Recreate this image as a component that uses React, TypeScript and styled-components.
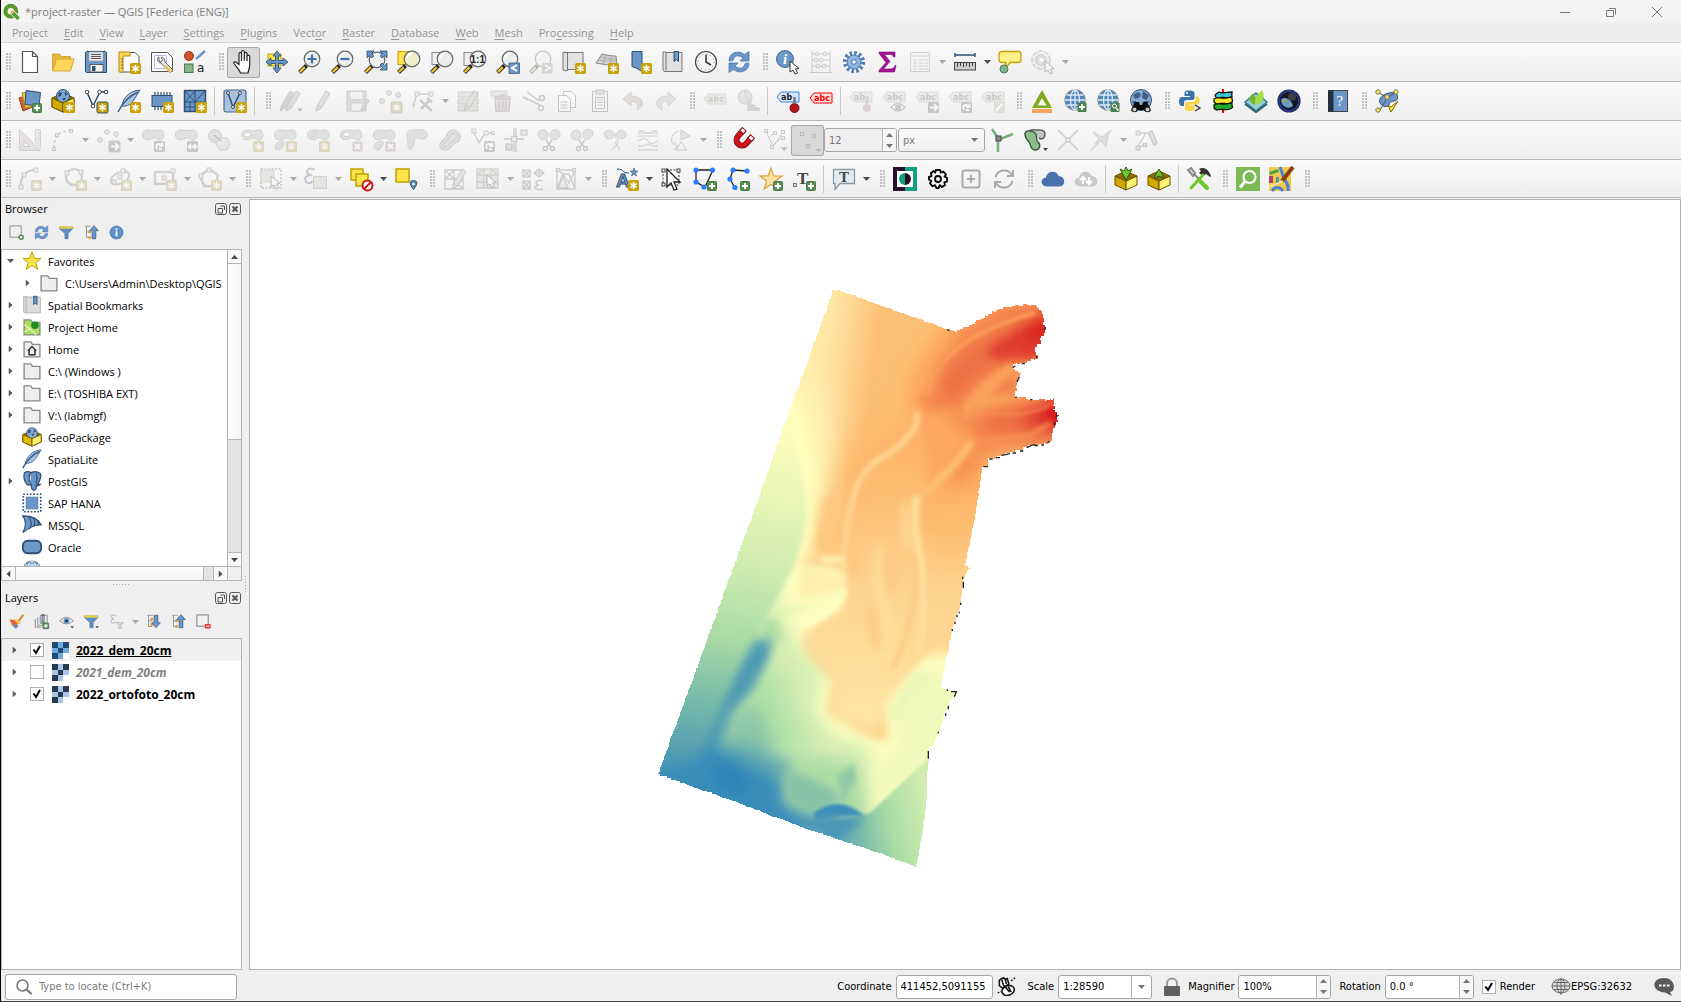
import React from "react";
import styled, { createGlobalStyle, css } from "styled-components";

const ui = `"Open Sans", "Noto Sans", sans-serif`;
const dlg = `"DejaVu Sans Condensed", "DejaVu Sans", sans-serif`;

const Global = createGlobalStyle`
  * { box-sizing: border-box; }
  body { margin: 0; background: #efefef; font-family: ${ui}; font-size: 12px; color: #000; }
  button, input, select { font: inherit; color: inherit; margin: 0; padding: 0; }
  button { border: 0; background: none; }
  svg { display: block; flex: none; }
`;

/* ---------- small icon parts ---------- */

const B = "#6b96c7";
const D = "#2d4f73";

const NewB = () => (
  <g>
    <rect x="13" y="13" width="11" height="11" rx="1.5" fill="#c8a20a" />
    <path d="M18.5 14.8v7.4M15.3 16.6l6.4 3.8M21.7 16.6l-6.4 3.8" stroke="#fff" strokeWidth="1.5" />
  </g>
);
const PlusB = () => (
  <g>
    <rect x="14.5" y="14.5" width="9" height="9" rx="1" fill="#5a8c5a" stroke="#4a7a4a" />
    <path d="M19 16v6M16 19h6" stroke="#fff" strokeWidth="2" />
  </g>
);
const MoveB = ({ d = "M15 18.5h7M19 15l3.500 3.500-3.500 3.500" }: { d?: string }) => (
  <g>
    <rect x="13" y="13" width="11" height="11" rx="1.5" fill="#6f6f6f" />
    <path d={d} stroke="#fff" strokeWidth="1.8" fill="none" />
  </g>
);
const turn = "M16 21c-2-5 1-6 5-4M21.500 14.500v3.500h-3.500M18 21h3";
const flip = "M14.500 18.500h8M17 16l-2.500 2.500 2.500 2.500M20 16l2.500 2.500-2.500 2.500";
const XB = () => (
  <g>
    <rect x="13.500" y="13.500" width="10" height="10" rx="1" fill="#b98a90" />
    <path d="M16 16l5 5M21 16l-5 5" stroke="#fff" strokeWidth="2" />
  </g>
);
const Corner = () => <path d="M18 19.500h6l-3 3.200z" fill="#444" />;
const Blob = ({ hole = false }: { hole?: boolean }) => (
  <g>
    <path
      d="M1.500 7c0-4 3-5.500 7-5S14 3 18 2s5 3 5 6-3 4.500-5 4S14 8.500 11 10.500 1.500 12.500 1.500 7z"
      fill="#aebdb0" stroke="#7d8a80"
    />
    {hole && <ellipse cx="7.500" cy="6.500" rx="3.500" ry="2.300" fill="#fff" stroke="#7d8a80" />}
  </g>
);
const Blob2 = () => <path d="M2 19c0-4 4-6 8-6 3 1 1 3 0 5s-2 4-4 4-4-1-4-3z" fill="#aebdb0" stroke="#7d8a80" />;
const Lens = ({ x = 14, y = 9, fill = "#eceeee" }: { x?: number; y?: number; fill?: string }) => (
  <g>
    <path d="M1.500 22.500l7-7" stroke="#222" strokeWidth="4" />
    <path d="M1.800 22.200l5-5" stroke="#f0c030" strokeWidth="2.400" />
    <circle cx={x} cy={y} r="7.800" fill={fill} stroke="#666" strokeWidth="1.200" />
    <path d={`M${x - 5} ${y - 1}a5.500 5.500 0 0 1 5-4.500`} stroke="#fff" strokeWidth="2" fill="none" />
  </g>
);
const Tag = ({ fill = "#d6d2bc", line = "#a8a48c", ink = "#666", t = "abc" }) => (
  <g>
    <path d="M1 8l4-5h18v10H5z" fill={fill} stroke={line} />
    <text x="5" y="11" fontFamily="DejaVu Sans" fontWeight="700" fontSize="8" fill={ink}>{t}</text>
  </g>
);
const Cursor = ({ x = 0, y = 0 }) => (
  <path transform={`translate(${x} ${y})`} d="M0 0v11l3-2 2 4 2.500-1-2-4 3.500-.500z" fill="#fff" stroke="#333" />
);
const Star = ({ fill = "#fbe54a", line = "#c4a000" }) => (
  <path d="M12 1l2.700 7.800 8.300.2-6.600 4.900 2.400 8.100L12 17.300 5.200 22l2.400-8.100L1 9l8.300-.2z" fill={fill} stroke={line} strokeWidth="1.200" />
);
const Globe = ({ cx = 12, cy = 11, r = 10 }) => (
  <g fill="none" stroke="#dfeaf5" strokeWidth="1.300">
    <circle cx={cx} cy={cy} r={r} fill="#4f86bd" stroke="#7a8894" />
    <ellipse cx={cx} cy={cy} rx={r * 0.45} ry={r} />
    <path d={`M${cx - r} ${cy}h${2 * r}M${cx} ${cy - r}v${2 * r}M${cx - r * 0.85} ${cy - r * 0.5}h${r * 1.7}M${cx - r * 0.85} ${cy + r * 0.5}h${r * 1.7}`} />
  </g>
);
const Box = () => (
  <g stroke="#6a5200" strokeWidth="1">
    <path d="M1 9l11 5v9L1 18z" fill="#d0a800" />
    <path d="M23 9l-11 5v9l11-5z" fill="#fcf070" />
    <path d="M1 9l11-5 11 5-11 5z" fill="#8a6d00" />
  </g>
);
const Scissors = ({ y = 12 }) => (
  <g fill="none" stroke="#7a6a70" strokeWidth="1.400">
    <path d={`M9 ${y}l5 7M15 ${y}l-5 7`} />
    <circle cx="8.500" cy="20.500" r="2" /><circle cx="15.500" cy="20.500" r="2" />
  </g>
);
const Sync = ({ c = B, e = "#4a7ab0" }) => (
  <g fill={c} stroke={e} strokeWidth=".8">
    <path d="M2 11C2 4 8 1 14 2.500l3.500 2L22 1.500V11h-9l3-3c-5-4-9-2-10 2.500z" />
    <path d="M22 13c0 7-6 10-12 8.500l-3.500-2L2 22.500V13h9l-3 3c5 4 9 2 10-2.500z" />
  </g>
);
const Pencil = ({ dx = 0, s = "#c9b9a0" }) => (
  <path transform={`translate(${dx} 0)`} d="M4 22l1.500-6L14 2l4 2.500L9.500 19z M5.500 16l4 3" fill={s} stroke="#777" />
);
const Pt = ({ x, y, c = "#ddd", r = 2 }: { x: number; y: number; c?: string; r?: number }) => (
  <rect x={x - r} y={y - r} width={2 * r} height={2 * r} fill={c} stroke="#777" />
);
const Folder = () => <path d="M2.500 3.500h8l2 3h9v15h-19z" fill="#eee" stroke="#888" strokeWidth="1.600" />;

/* ---------- icon set, 24 x 24 ---------- */

const icons: Record<string, React.ReactNode> = {
  "New Project": <path d="M4.500 1.500h10l5 5v16h-15zM14.500 1.500v5h5" fill="#fff" stroke="#555" strokeWidth="1.200" />,
  "Open Project": (
    <g stroke="#d2aa3a"><path d="M1.500 20V4h7l2 2.500h9V11" fill="#e8b83a" /><path d="M1.500 21l4-12h17.500l-3.500 12z" fill="#fbd65a" /></g>
  ),
  "Save Project": (
    <g><path d="M2.500 1.500h19l1 1v20h-20l-1-1v-19z" fill={B} stroke={D} /><rect x="5" y="2" width="14" height="9" fill="#e9e9e9" stroke="#999" strokeWidth=".6" /><path d="M7 4.500h10M7 6.500h10M7 8.500h10" stroke="#555" /><rect x="6" y="14.500" width="13" height="7.500" fill="#f2f2f2" stroke="#444" strokeWidth=".8" /><rect x="8" y="16" width="3.500" height="5" fill={D} /></g>
  ),
  "New Layout": (
    <g><path d="M3 2.500h15l4 4V22H3z" fill="#fff" stroke="#555" /><path d="M2 2h11v4H6v16H2z" fill="#fbd65a" stroke="#b58a10" /><path d="M4 9h2M4 12h2M4 15h2M4 18h2" stroke="#7a5a00" /><NewB /></g>
  ),
  "Layout Manager": (
    <g><path d="M1.500 2.500h16l5 5v14h-21z" fill="#fff" stroke="#555" /><path d="M4.500 5.500h12v13h-12z" fill="none" stroke="#a9bbe8" /><path d="M9 7c-3 1-2 6 2 6l9 9.500 3-2.500-8-8c0-3-2-5-4-5l1.500 3-1.500 2-2-1z" fill="#e5e5e5" stroke="#666" /><path d="M15 16l6 6" stroke="#e8c65a" strokeWidth="3" /></g>
  ),
  "Style Manager": (
    <g><circle cx="6" cy="6" r="4.500" fill="#d2522a" stroke="#8a3010" /><path d="M13 9l9-8" stroke={B} strokeWidth="2.500" /><rect x="1.500" y="14" width="8.500" height="8.500" fill="#8ab58a" stroke="#4a7a4a" /><text x="14" y="22" fontFamily="DejaVu Sans" fontSize="12" fill="#222">a</text></g>
  ),
  "Pan Map": (
    <path d="M8.500 23c-1-3-4-6-6.500-9.500-.5-2 1.500-2 2.500-1l2.500 2V4c0-2 2.300-2 2.500 0V2c.2-2 2.600-2 2.800 0v1.500c.5-1.500 2.500-1.500 2.700.5v2c.6-1.300 2.700-1.200 2.700.8V15c0 3-1.200 5-1.700 8zM9.500 4v7M12.300 3.500v7M15 5v6" fill="#fff" stroke="#222" strokeWidth="1.200" />
  ),
  "Pan Map to Selection": (
    <g><rect x="3" y="4" width="13" height="12" fill="#fbe54a" stroke="#c4a000" /><path d="M12 1l4 5h-2.500v4.500H18V8l5 4-5 4v-2.500h-4.500V18H16l-4 5-4-5h2.500v-4.500H6V16l-5-4 5-4v2.500h4.500V6H8z" fill={B} stroke={D} strokeWidth=".9" /></g>
  ),
  "Zoom In": <g><Lens /><path d="M14 4.500v9M9.500 9h9" stroke="#3d72b0" strokeWidth="2.200" /></g>,
  "Zoom Out": <g><Lens /><path d="M9.500 9h9" stroke="#3d72b0" strokeWidth="2.200" /></g>,
  "Zoom Full": (
    <g><Lens x={13} y={10} /><g fill={B} stroke={D} strokeWidth=".8"><path d="M3 1h7L7.500 3.500 10 6 8 8 5.500 5.500 3 8z" /><path d="M23 1v7l-2.500-2.500L18 8l-2-2 2.500-2.500L16 1z" /><path d="M23 20h-7l2.500-2.500L16 15l2-2 2.500 2.500L23 13z" /></g></g>
  ),
  "Zoom to Selection": <g><rect x="1" y="1.500" width="13" height="13" fill="#fbe54a" stroke="#c4a000" /><Lens x={15} fill="#efecc8" /></g>,
  "Zoom to Layer": <g><rect x="2" y="2.500" width="12" height="12" fill="#eee" stroke="#888" /><Lens x={15} /></g>,
  "Zoom to Native": (
    <g><rect x="1" y="2.500" width="8" height="13" fill="#eee" stroke="#888" /><Lens x={15} fill="#eee" /><text x="7.500" y="12.500" fontFamily="Liberation Sans" fontWeight="700" fontSize="10" fill="#222">1:1</text></g>
  ),
  "Zoom Last": <g><Lens x={14} /><rect x="13" y="13" width="10.500" height="10.500" fill={B} stroke={D} strokeWidth=".7" /><path d="M21 15l-5 3 5 3" stroke="#fff" strokeWidth="2" fill="none" /></g>,
  "Zoom Next": <g><Lens x={14} /><rect x="13" y="13" width="10.500" height="10.500" fill="#999" /><path d="M16 15l5 3-5 3" stroke="#fff" strokeWidth="2" fill="none" /></g>,
  "New Map View": <g><path d="M4 2.500h17v17H6l-2 1.500-3-1V2z" fill="#e2e2e2" stroke="#777" /><path d="M1.500 2.500h4v18" fill="none" stroke="#777" /><NewB /></g>,
  "New 3D Map View": <g><path d="M7 4c5 1 8 2 14 2l1 9c-7 0-12 0-21-2z" fill="#d0d0d0" stroke="#888" /><path d="M3 10c6 1 12 1 18 1M5 7c5 1 10 2 16 2M11 5L8 14M16 6l-1 9" stroke="#a4a4a4" fill="none" strokeWidth=".8" /><NewB /></g>,
  "New Spatial Bookmark": <g><path d="M4 1.500h10v20l-5-3-5-2z" fill={B} stroke={D} /><NewB /></g>,
  "Show Spatial Bookmarks": <g><path d="M5 2.500h16v19H3l-1-2V2h3zM5 2.500v18" fill="#e2e2e2" stroke="#777" /><path d="M13 1.500h4.500v10l-2.200-2-2.300 2z" fill={B} stroke={D} /></g>,
  "Temporal Controller": <g><circle cx="12" cy="12" r="10.500" fill="#f2f4f6" stroke="#444" strokeWidth="1.200" /><circle cx="12" cy="12" r="8" fill="none" stroke="#889" strokeDasharray="1 3.200" /><path d="M12 4.500V12l5 3" stroke="#333" strokeWidth="1.500" fill="none" /></g>,
  Refresh: <Sync />,
  "Identify Features": <g><circle cx="9" cy="9" r="8.500" fill={B} stroke={D} strokeWidth=".8" /><text x="7" y="14" fontFamily="Liberation Serif" fontStyle="italic" fontWeight="700" fontSize="15" fill="#fff">i</text><Cursor x={14} y={11} /></g>,
  "Field Calculator": <g fill="none" stroke="#777"><path d="M3 1v21M21 1v21M1 22.500h22M3 4h18M3 10h18M3 16h18" /><g fill="#ddd"><circle cx="8" cy="4" r="2" /><circle cx="16" cy="4" r="2" /><circle cx="7" cy="10" r="2" /><circle cx="12" cy="10" r="2" /><circle cx="9" cy="16" r="2" /><circle cx="15" cy="16" r="2" /></g></g>,
  Toolbox: <g><circle cx="12" cy="12" r="8.800" fill="none" stroke="#4a7ab0" strokeWidth="4.600" strokeDasharray="2.400 2.208" /><circle cx="12" cy="12" r="7" fill="#8db4dd" stroke="#4a7ab0" /><circle cx="12" cy="12" r="2.300" fill="#f2f2f2" stroke="#4a7ab0" /></g>,
  "Statistical Summary": <path d="M4 2h16v5h-1.500c-.5-2-1.500-2.500-4-2.500H9.500L15 11.500 8.500 19H15c3 0 4-1 5-3.500h1L19.500 22H4v-1.500l7-8-7-9z" fill="#a8129a" stroke="#780a70" strokeWidth=".6" />,
  "Attribute Table": <g fill="#eef1f3" stroke="#888"><rect x="2.500" y="2.500" width="19" height="19" /><path d="M3 6h18M5 10h4M11 10h4M16 10h4M5 13h4M11 13h4M16 13h4M5 16h4M11 16h4M16 16h4M5 19h4M11 19h4M16 19h4" /></g>,
  "Measure Line": <g><path d="M2 5h20M2 3v4M22 3v4" stroke={D} strokeWidth="1.400" /><rect x="1.500" y="12.500" width="21" height="7.500" fill="#ccc" stroke="#444" /><path d="M4.500 13v4M7.500 13v3M10.500 13v4M13.500 13v3M16.500 13v4M19.500 13v3" stroke="#444" /></g>,
  "Map Tips": <g><path d="M4 1.500h16q3 0 3 3v5q0 3-3 3h-8L7 19l1-6.500H4q-3 0-3-3v-5q0-3 3-3z" fill="#fbf08a" stroke="#c4a000" strokeWidth="1.300" /><circle cx="6" cy="19" r="4" fill="#7db58a" stroke="#4a7a5a" /></g>,
  "Run Feature Action": <g><circle cx="10" cy="10" r="9" fill="#e2e2e2" stroke="#888" strokeWidth="1.500" strokeDasharray="5 1.500" /><circle cx="10" cy="10" r="5.500" fill="#aaa" stroke="#888" /><path d="M8.500 7l5 3-5 3z" fill="#fff" /><Cursor x={14} y={11} /></g>,

  "Data Source Manager": <g><path d="M1 9l10-3 3 12-9 4z" fill="#d2602a" stroke="#9a3a10" /><path d="M4 4l11-2 2 15-10 2z" fill="#f2c94a" stroke="#a88a10" /><path d="M8 1.500l14.500 2L21 17 7 15.500z" fill={B} stroke={D} /><PlusB /></g>,
  "New GeoPackage Layer": <g><Box /><circle cx="12" cy="7" r="6.500" fill="#7ba5d4" stroke={D} /><path d="M8 3l3 1-1 3-3 1zM14 2l3 3-3 2zM11 9l4 0-2 3z" fill={D} /><path d="M1 9l11 5v9L1 18z" fill="#d0a800" stroke="#6a5200" /><path d="M23 9l-11 5v9l11-5z" fill="#fcf070" stroke="#6a5200" /><NewB /></g>,
  "New Shapefile Layer": <g fill="none" stroke={D}><path d="M3 3l6 14L16 3h6" strokeWidth="1.500" /><g fill="#fff" stroke="#444"><circle cx="3" cy="3" r="1.800" /><circle cx="9" cy="17" r="1.800" /><circle cx="15.500" cy="3" r="1.800" /><circle cx="22" cy="3" r="1.800" /></g><NewB /></g>,
  "New SpatiaLite Layer": <g><path d="M23 1C12 2 6 9 5 17c5 1 10-2 13-8z" fill="#a9c4e4" stroke="#3d618a" /><path d="M1 23C5 15 12 7 21 3" fill="none" stroke="#3d618a" strokeWidth="1.500" /><NewB /></g>,
  "New Scratch Layer": <g><path d="M5 3v18M8 3v18M11 3v18M14 3v18M17 3v18M20 3v18" stroke={D} strokeWidth="1.200" /><rect x="2" y="6.500" width="20" height="11" fill={B} stroke={D} /><NewB /></g>,
  "New Mesh Layer": <g><rect x="1.500" y="1.500" width="21" height="21" fill={B} stroke={D} strokeWidth="1.500" /><path d="M1.500 13h21M12 1.500v21M2 2l10 11M12 2L2 13M22 2L12 13M7 13v9M2 18h10" stroke={D} fill="none" /><NewB /></g>,
  "New Virtual Layer": <g><rect x="1" y="1" width="22" height="22" rx="2" fill="#a9c1de" stroke="#4a6a8f" strokeWidth="1.200" /><path d="M5 4l5 14 7-14" stroke={D} strokeWidth="1.500" fill="none" /><g fill="#fff" stroke="#444"><circle cx="5" cy="4" r="1.500" /><circle cx="10" cy="18" r="1.500" /><circle cx="17" cy="4" r="1.500" /></g><NewB /></g>,
  "Current Edits": <g><Pencil dx={-3} s="#9a9a98" /><Pencil dx={3} s="#bdaaa0" /><Corner /></g>,
  "Toggle Editing": <Pencil />,
  "Save Layer Edits": <g><path d="M2 2h19v20H2z" fill="#aaa" stroke="#777" /><path d="M5 2.500h13v8H5zM6 14h12v8H6z" fill="#eee" stroke="#888" /><path d="M16 22l1-4 5-8 2 1.500-5 9z" fill="#b98" stroke="#777" /></g>,
  "Add Feature": <g fill="#bbb" stroke="#777"><circle cx="4" cy="12" r="2.500" /><circle cx="11" cy="4" r="2.500" /><circle cx="20" cy="6" r="2.500" /><NewB /></g>,
  "Vertex Tool": <g fill="none" stroke="#777"><path d="M6 5L2 18M6 5h13" strokeWidth="1.500" /><Pt x={6} y={5} /><Pt x={20} y={5} /><path d="M10 20l9-9M9 11l12 11M16 9l5 4" stroke="#887c6c" strokeWidth="2.500" /></g>,
  "Modify Attributes": <g><path d="M2 3h20v5H2zM2 10h20v5H2zM2 17h20v5H2z" fill="#c8c8a8" stroke="#888" /><Pencil dx={4} /></g>,
  "Delete Selected": <g><path d="M2 2h16v5H2z" fill="#d8c8b0" stroke="#999" /><path d="M6 10h15l-1 12H7zM5 8h17M11 6h5M10 12v8M13.500 12v8M17 12v8" fill="#cdb4b4" stroke="#867070" strokeWidth="1.300" /></g>,
  "Cut Features": <g fill="none" stroke="#777" strokeWidth="1.500"><path d="M1 8l17 8M5 3l12 9" /><circle cx="20" cy="9" r="2.500" /><circle cx="19" cy="19" r="2.500" /></g>,
  "Copy Features": <g fill="#fff" stroke="#666"><path d="M8.500 2.500h8l4 4v12h-12z" /><path d="M3.500 6.500h8l4 4v12h-12zM5.500 13h7M5.500 16h7M5.500 19h7" /></g>,
  "Paste Features": <g fill="#f2f2ee" stroke="#666"><rect x="4.500" y="2.500" width="15" height="20" /><rect x="8" y="1" width="8" height="4" fill="#bbb" /><path d="M7.500 8.500h9v11h-9zM9 11h6M9 13.500h6M9 16h6" fill="#fff" /></g>,
  Undo: <path d="M10 3L2 10l8 7v-4c5-1 8 1 6 8 8-4 8-14-6-14z" fill="#c2a898" stroke="#988" />,
  Redo: <path d="M14 3l8 7-8 7v-4c-5-1-8 1-6 8-8-4-8-14 6-14z" fill="#b2c2b2" stroke="#898" />,
  "Layer Labeling": <g transform="translate(0 2)"><Tag ink="#777" /></g>,
  "Layer Diagrams": <g><circle cx="9" cy="8" r="7" fill="#aebfae" stroke="#7d8a80" /><path d="M9 8V1a7 7 0 0 1 6 10z" fill="#cdb0b0" stroke="#988" /><path d="M12 22V12h3v10M16 22v-6h3v6M20 22v-3h3v3" fill="#aab4b0" stroke="#778" /></g>,
  "Pin Labels Tool": <g><Tag fill="#d5e6fb" line="#3d86e0" ink="#222" t="ab" /><circle cx="18.500" cy="19" r="4.500" fill="#b3161c" stroke="#7a0a10" /><path d="M18.500 15V8" stroke="#777" strokeWidth="2.500" /></g>,
  "Show Unplaced Labels": <g transform="translate(0 1)"><Tag fill="#ffdede" line="#ff0000" ink="#f00000" /></g>,
  "Pin Unpin Labels": <g><Tag t="ab" /><circle cx="18" cy="19" r="4" fill="#b98a8a" /><path d="M18 15V7" stroke="#888" strokeWidth="3" /></g>,
  "Show Hide Labels": <g><Tag /><path d="M9 18.500q7-8 14 0-7 7-14 0z" fill="#fff" stroke="#777" strokeWidth="1.300" /><circle cx="16" cy="18.500" r="3" fill="#777" /></g>,
  "Move Label": <g><Tag /><MoveB /></g>,
  "Rotate Label": <g><Tag /><MoveB d={turn} /></g>,
  "Change Label": <g><Tag /><rect x="13" y="13" width="11" height="11" fill="#bdb69a" /><path d="M15 22l6-7" stroke="#fff" strokeWidth="2.500" /></g>,
  "GRASS Tools": <g><path d="M12 1l10 18H2zM12 9l-4.500 7.500h9z" fill="#7fa81c" fillRule="evenodd" /><path d="M2 21h20M2 23h20" stroke="#f08a28" strokeWidth="1.300" /></g>,
  "Add WMS": <g><Globe /><rect x="14.500" y="13.500" width="9" height="9.500" rx="1" fill="#4a8050" /><path d="M19 15v6M16 18h6" stroke="#fff" strokeWidth="1.800" /></g>,
  "Search WMS": <g><Globe /><rect x="14.500" y="13.500" width="9" height="9.500" rx="1" fill="#4a8050" /><circle cx="18.500" cy="17" r="2" fill="none" stroke="#fff" /><path d="M20 19l2.500 2.500" stroke="#fff" strokeWidth="1.500" /></g>,
  MetaSearch: <g><circle cx="12" cy="11" r="10.500" fill="#88add4" stroke={D} /><path d="M4 6l5-3 3 2-2 4-4 1zM14 2l6 4-2 5-5-2zM3 12l4 0 2 4H5zM14 12l7 0-3 3z" fill="#3d5f88" /><path d="M6 13h4l1 3h2l1-3h4l4 8c-1 3-6 3-7 0h-6c-1 3-6 3-7 0z" fill="#0a0a0a" /><circle cx="5.500" cy="20.500" r="2" fill="#ccc" /><circle cx="18.500" cy="20.500" r="2" fill="#ccc" /></g>,
  "Python Console": <g><path d="M11 1.500c-4 0-4.500 1.500-4.500 3V7H12v1H4C2 8 1 10 1 12.500S2 17 4 17h2v-3c0-2 1-3 3-3h5c2 0 2.500-1 2.500-2.500v-4c0-2-1.500-3-5.500-3z" fill="#3a72a4" /><path d="M12 22c4 0 4.500-1.500 4.500-3v-2.500H11v-1h8c2 0 2.500-2 2.500-4S21 7.500 19 7.500h-1.500v3c0 1.500-1 2.500-3 2.500h-5c-2 0-2.500 1-2.500 2.500v4c0 1.500 1 2.500 5 2.500z" fill="#fcd246" /><circle cx="9" cy="4" r="1" fill="#fff" /><path d="M17 16l5 3-5 3" stroke="#333" strokeWidth="1.300" fill="none" /></g>,
  "Layer Stack": <g stroke="#111" strokeWidth="1.300"><path d="M12 0v24" stroke="#f00" strokeWidth="2" /><path d="M3 16l4-2c5 3 8 0 14 0-1 3 3 4-2 6-5 2-8-1-13 1-4-1-3-4-3-5z" fill="#1fae2c" /><path d="M3 10l4-2c5 3 8 0 14 0-1 3 3 4-2 6-5 2-8-1-13 1-4-1-3-4-3-5z" fill="#f5e626" /><path d="M5 5l3-2c4 2 8 0 13 0-1 3 2 3-2 5-5 2-8-1-12 1-4-1-3-3-2-4z" fill="#3fc6dc" /></g>,
  "Leaf Plugin": <g><path d="M1 13l11-9 11 9-11 9z" fill="#8fd0d8" stroke="#3a7a86" strokeWidth="1.500" /><path d="M1 15l11 8 11-8" fill="none" stroke="#2f6670" strokeWidth="2" /><path d="M11 16C4 13 5 7 8 5c4 2 5 6 3 11z" fill="#6cb82a" /><path d="M11 16c-1-8 4-12 7-15 3 6 3 13-7 15z" fill="#a6dc4a" /></g>,
  "Earth Engine": <g><circle cx="12" cy="12" r="11" fill="#2a3a86" stroke="#1c2a66" strokeWidth="1.200" /><circle cx="12" cy="12" r="9" fill="#15181f" /><circle cx="15" cy="8" r="4" fill="#3a3d44" /><path d="M4 11c2-4 10-2 12 6-4 4-12 1-12-6z" fill="#5f98d4" /><path d="M5 11l4-1 1 3-3 1zM11 14l3 1-1 3z" fill="#b3a840" /></g>,
  "Help Contents": <g><rect x="2.500" y="1.500" width="19" height="21" fill={B} stroke="#444" /><rect x="2" y="1.500" width="5.500" height="21" fill="#23313f" /><text x="10.500" y="17" fontFamily="Liberation Serif" fontSize="15" fill="#fff">?</text></g>,
  "Geometry Checker": <g><path d="M5 10c3-6 10-6 15-7 4 4 3 9-1 9-5 0-4 3-6 5-4 2-10-2-8-7z" fill={B} stroke={D} /><path d="M3 3l9 6 9-6M5 21l7-12" stroke="#555" fill="none" /><g fill="#f7ec3c" stroke="#777"><circle cx="3" cy="3" r="2.200" /><circle cx="21" cy="3" r="2.200" /><circle cx="12" cy="8" r="2.200" /><circle cx="3" cy="21" r="2.200" /></g><path d="M13 16l3 7 7-11-7 6z" fill="#f7ec3c" stroke="#886a00" /></g>,

  "Advanced Digitizing": <g fill="#cdb9a8" stroke="#888"><path d="M1.500 1.500l21 21h-21zM6 13v5.500h5.500z" fillRule="evenodd" /><path d="M17.500 1.500h5v18l-5-5zM20 5h2M20 8h2M20 11h2" fill="#d8d4c0" /></g>,
  "Circular String": <g><path d="M3 20C3 8 8 3 19 3" fill="none" stroke="#777" strokeDasharray="3 2" strokeWidth="1.500" /><Pt x={3} y={21} r={1.500} /><Pt x={6} y={7} r={1.500} /><Pt x={20} y={3} r={1.500} /></g>,
  "Move Feature": <g fill="#bbb" stroke="#777"><circle cx="4" cy="12" r="2.500" /><circle cx="11" cy="4" r="2.500" /><circle cx="20" cy="6" r="2.500" /><MoveB /></g>,
  "Rotate Feature": <g><Blob /><MoveB d={turn} /></g>,
  "Scale Feature": <g><Blob /><MoveB d={flip} /></g>,
  "Simplify Feature": <g fill="#aebdb0" stroke="#7d8a80"><circle cx="8" cy="8" r="6.500" /><path d="M9 16l4-6h7l3.500 6-4 6h-7z" fill="#c8d4ca" /><path d="M7 7l7 6" stroke="#555" strokeWidth="1.500" /></g>,
  "Add Ring": <g><Blob hole /><NewB /></g>,
  "Add Part": <g><Blob /><Blob2 /><NewB /></g>,
  "Fill Ring": <g><Blob hole /><ellipse cx="7.500" cy="6.500" rx="3" ry="2" fill="#9fb0a2" /><NewB /></g>,
  "Delete Ring": <g><Blob hole /><XB /></g>,
  "Delete Part": <g><Blob /><Blob2 /><XB /></g>,
  "Reshape Features": <path d="M2 6c1-5 4-4 7-4s11-2 13 3-3 7-6 6-5-2-6 0 0 6-3 9-4 0-4-3-1-7-1-11z" fill="#aebdb0" stroke="#7d8a80" />,
  "Offset Curve": <path d="M2 18c-1-5 5-6 6-9S11 2 15 2s9 4 7 9-6 3-8 7-11 6-12 0zM5 17c0-3 5-3 6-7s4-5 6-5 4 3 2 5-5 3-7 6-6 4-7 1z" fill="#aebdb0" stroke="#7d8a80" strokeWidth="1.200" />,
  "Reverse Line": <g><path d="M2 3l6 12L14 5l8 0" fill="none" stroke="#777" strokeWidth="1.500" /><Pt x={3} y={3} /><Pt x={15} y={5} /><Pt x={22} y={5} r={1.500} /><MoveB d={turn} /></g>,
  "Trim Extend": <g fill="none" stroke="#777" strokeWidth="1.300"><path d="M10 0v9M10 15v9M0 11h20M12 0v24" /><rect x="7.500" y="8.500" width="5" height="5" fill="#eee" /><rect x="17" y="2" width="6" height="5" fill="#cfc29a" /><rect x="2" y="16" width="6" height="6" fill="#cdb0b0" /></g>,
  "Split Features": <g><path d="M1 6c0-6 10-6 10 1 0 7-10 6-10-1zM23 6c0-6-10-6-10 1 0 7 10 6 10-1z" fill="#aebdb0" stroke="#7d8a80" /><Scissors /></g>,
  "Split Parts": <g><path d="M1 7c0-6 10-7 10 0 0 7-10 6-10 0zM23 5c0-5-10-5-10 1 0 8 10 6 10-1z" fill="#aebdb0" stroke="#7d8a80" /><Scissors /></g>,
  "Merge Features": <g><path d="M1 6c0-5 9-5 10 0h3c0-5 9-5 9 0 0 6-8 6-9 2h-3c-1 4-10 4-10-2z" fill="#aebdb0" stroke="#7d8a80" /><path d="M12 9c5 3 2 10-3 12M12 14l5 8" stroke="#777" fill="none" /></g>,
  "Merge Attributes": <g stroke="#777" fill="none"><path d="M2 3h6q4 5 8 0h6M2 8h20M2 13q8-5 10 0t10 0M2 18h6q4-4 8 0h6M2 22h20M2 5h20" /></g>,
  "Rotate Symbols": <g stroke="#777" fill="none"><path d="M10 3C1 5 0 16 8 19M5 14l4 5-5 3" /><path d="M12 2l9 6-9 4z" fill="#bbb" /><path d="M12 14l6 8H7z" /></g>,
  "Enable Snapping": <g transform="rotate(42 12 12)"><path d="M4 3h5v9a3 3 0 0 0 6 0V3h5v9a8 8 0 0 1-16 0z" fill="#d4141a" stroke="#8a0a10" /><path d="M4 2.500h5v4H4zM15 2.500h5v4h-5z" fill="#fff" stroke="#8a0a10" /></g>,
  "Snap Mode": <g stroke="#777" fill="none"><path d="M3 3l7 16 8-12M6 10l5-5M10 17l10-9" /><Pt x={3} y={3} r={1.500} /><Pt x={12} y={5} r={1.500} /><Pt x={20} y={4} r={1.500} /><Pt x={20} y={10} r={1.500} /><Pt x={9} y={19} r={1.500} /><Corner /></g>,
  "Snap Type": <g><Pt x={6} y={6} r={1.500} /><Pt x={18} y={8} r={1.500} /><Pt x={12} y={18} r={1.500} /><path d="M20 21h5l-2.500 2.800z" fill="#555" /></g>,
  "Topological Editing": <g stroke="#79b07c" strokeWidth="2.500" fill="none"><path d="M2 1l6 9M10 11l13-5M8 13v11" /><rect x="6" y="8" width="5" height="5" fill="#888" stroke="#444" strokeWidth="1" /></g>,
  "Avoid Overlap": <g><path d="M5 4c3-4 7-2 9-2s8-1 8 4-4 6-6 4" fill="#c4c4c4" stroke="#555" strokeWidth="1.300" /><path d="M2 6c0-4 7-4 10-1 3 2 0 6 3 9s2 8-3 8-4-6-6-8S2 9 2 6z" fill="#8dbd8d" stroke="#3d5a40" strokeWidth="1.500" /><path d="M20 20h5l-2.500 3z" fill="#444" /></g>,
  "Snap Intersection": <g stroke="#777" strokeWidth="1.500" fill="none"><path d="M2 2l20 20M22 2L2 22" /><circle cx="12" cy="12" r="2" fill="#eee" /></g>,
  "Tracing": <g stroke="#999" strokeWidth="1.300" fill="none"><path d="M2 22L23 2" /><path d="M4 4l9 5 7-5-3 14-5-5-6 3 4-5z" fill="#b5ad92" /></g>,
  "Self Snapping": <g stroke="#777" strokeWidth="1.300" fill="none"><path d="M3 5l9 0-9 15 7-3" /><path d="M14 5l6 12 3-2-5-12z" fill="#bbb" /><Pt x={4} y={5} r={1.800} /><Pt x={4} y={20} r={1.800} /><Pt x={11} y={17} r={1.500} /></g>,

  "Add Circular String": <g><path d="M3 20C2 10 8 3 17 3" fill="none" stroke="#777" strokeWidth="2" /><Pt x={3} y={20} /><Pt x={6} y={8} /><Pt x={18} y={3} /><NewB /></g>,
  "Add Circle": <g><circle cx="11" cy="10" r="8" fill="none" stroke="#888" strokeWidth="2.500" /><Pt x={4} y={6} /><Pt x={18} y={5} /><NewB /></g>,
  "Add Ellipse": <g><ellipse cx="12" cy="11" rx="10" ry="5.500" transform="rotate(-25 12 11)" fill="none" stroke="#888" strokeWidth="2" /><Pt x={12} y={10} /><Pt x={6} y={15} /><Pt x={15} y={4} /><NewB /></g>,
  "Add Rectangle": <g><rect x="2" y="5" width="18" height="12" fill="none" stroke="#888" strokeWidth="2.500" /><Pt x={11} y={11} /><Pt x={20} y={4} /><NewB /></g>,
  "Add Regular Polygon": <g><path d="M11 2l9 6-3 11H6L2 9z" fill="none" stroke="#888" strokeWidth="2.500" /><Pt x={11} y={3} /><Pt x={3} y={9} /><NewB /></g>,
  "Select Features": <g><rect x="2" y="2" width="20" height="19" fill="none" stroke="#666" strokeDasharray="2 1.500" strokeWidth="1.500" /><rect x="2" y="3" width="13" height="12" fill="#cfc4a8" stroke="#999" /><Cursor x={12} y={9} /></g>,
  "Select by Expression": <g><path d="M11 3C4-1 0 5 6 8c-7 1-6 9 0 8l5-3" fill="none" stroke="#667" strokeWidth="2" /><rect x="9.500" y="9.500" width="13" height="12" fill="#cfc4a8" stroke="#888" /></g>,
  "Deselect Features": <g><rect x="2" y="2" width="12" height="11" fill="#fbe54a" stroke="#c4a000" strokeWidth="1.500" /><rect x="7" y="7" width="12" height="12" fill="#fbe54a" stroke="#c4a000" strokeWidth="1.500" /><circle cx="18.500" cy="18.500" r="5" fill="#fff" stroke="#d4141a" strokeWidth="2" /><path d="M15 22l7-7" stroke="#d4141a" strokeWidth="2" /></g>,
  "Select by Location": <g><rect x="2" y="2" width="13" height="13" fill="#fbe54a" stroke="#c4a000" strokeWidth="1.500" /><path d="M19.500 22.500c-5-6-4-9 0-9s5 3 0 9z" fill="#5a86a8" stroke="#3d5a70" /><circle cx="19.500" cy="17" r="1.300" fill="#fff" /></g>,
  "Edit Mesh": <g stroke="#777" fill="none"><path d="M2 3h18v19H2zM2 12h18M11 3v19M2 3l9 9M11 3l-9 9M11 12l9 10M20 12l-9 10" strokeWidth="1.300" /><Pencil dx={5} /></g>,
  "Select Mesh": <g stroke="#888" fill="#d0cab0"><path d="M1 2h21v19H1zM1 8h21M1 15h21M8 2v19M15 2v19M1 8l7-6M22 8l-7-6" strokeWidth="1.300" /><Cursor x={11} y={8} /></g>,
  "Transform Mesh": <g stroke="#777" fill="none" strokeWidth="1.300"><rect x="2" y="3" width="7" height="7" /><path d="M2 3l7 7M9 3L2 10" /><path d="M13 6l5-4 5 4-5 4zM13 6h10M18 2v8" /><rect x="2" y="14" width="7" height="8" /><path d="M2 14l7 8M9 14l-7 8M22 14c-8-2-9 3-4 4-7 1-5 6 4 4" strokeWidth="1.500" /></g>,
  "Reindex Mesh": <g stroke="#777" fill="none" strokeWidth="1.300"><path d="M3 3h18v19H3zM3 22L9 7l6 0 6 15M9 7l6 9 6-13M3 3l6 4" /><path d="M9 9l5 12H4z" fill="#ddd6b8" /><Pt x={4} y={3} r={1.500} /><Pt x={20} y={3} r={1.500} /></g>,
  "New Annotation Layer": <g><text x="1" y="20" fontFamily="Liberation Sans" fontWeight="700" fontSize="19" fill={B} stroke={D} strokeWidth=".9">A</text><path d="M2 2c8 0 4 4 12 4" fill="none" stroke={D} /><path d="M19 1l1 3h3l-2.500 2 1 3-2.500-2-2.500 2 1-3L15 4h3z" fill={B} stroke={D} strokeWidth=".6" /><NewB /></g>,
  "Select Annotation": <g><path d="M3 3h16v15H3z" fill="none" stroke="#444" strokeDasharray="2 1.500" /><g fill="#fff" stroke="#444"><rect x="2" y="2" width="3" height="3" /><rect x="17" y="2" width="3" height="3" /><rect x="2" y="16" width="3" height="3" /></g><path d="M7 2v18l4-4 3 7 3-1-3-7h6z" fill="#fff" stroke="#222" strokeWidth="1.300" /></g>,
  "Polygon Annotation": <g><path d="M3 3h17l-8 17-9-5z" fill="none" stroke="#222" strokeWidth="1.300" /><g fill="#2a7fff"><circle cx="3" cy="3" r="2.600" /><circle cx="19.500" cy="3" r="2.600" /><circle cx="3" cy="15" r="2.600" /><circle cx="11" cy="20" r="2.600" /></g><PlusB /></g>,
  "Line Annotation": <g><path d="M21 4l-14-1L4 12l5 9" fill="none" stroke="#222" strokeWidth="1.300" /><g fill="#2a7fff"><circle cx="21" cy="4" r="2.600" /><circle cx="7" cy="3" r="2.600" /><circle cx="4" cy="12" r="2.600" /><circle cx="9" cy="20.500" r="2.600" /></g><PlusB /></g>,
  "Marker Annotation": <g><Star fill="#fbe2a0" line="#d9a440" /><PlusB /></g>,
  "Text Annotation": <g><Pt x={3} y={18} r={1.500} /><text x="5" y="17" fontFamily="Liberation Serif" fontWeight="700" fontSize="17" fill="#444">T</text><PlusB /></g>,
  "Text Balloon": <g><path d="M1.500 2.500h21v14H8l-5 6v-6H1.500z" fill="#e4ecf0" stroke="#8a97a0" strokeWidth="1.300" /><text x="7" y="14.500" fontFamily="Liberation Serif" fontWeight="700" fontSize="15" fill="#444">T</text></g>,
  "Contrast": <g><path d="M0 0h12v24H0z" fill="#2a0f2a" /><path d="M12 0h12v24H12z" fill="#0da27c" /><rect x="4" y="4" width="16" height="16" fill="#fff" /><path d="M12 6a6 6 0 0 0 0 12z" fill="#0da27c" /><path d="M12 6a6 6 0 0 1 0 12z" fill="#2a0f2a" /></g>,
  "Plugin Settings": <g fill="none" stroke="#0a0a0a" strokeWidth="1.900"><path d="M10 3h4l.8 2.600 2.600-1 2.500 2.800-1.300 2.300L21 11v3.500l-2.600.8.500 2.700-3 2-2-1.700L12.500 21h-2l-1.500-2.700-2.700.8-2.300-2.700 1.200-2.400L3 12.500V10l2.500-1-.6-2.600L7.500 4l1.700 1.400z" /><circle cx="12" cy="12" r="3" /></g>,
  "Add Item": <g fill="none" stroke="#aaa" strokeWidth="2"><rect x="3.500" y="3.500" width="17" height="17" rx="2" /><path d="M12 8v8M8 12h8" /></g>,
  "Reload": <g fill="none" stroke="#aaa" strokeWidth="2"><path d="M3.500 10A9 9 0 0 1 20 8M21 3v6h-6M20.500 14A9 9 0 0 1 4 16M3 21v-6h6" /></g>,
  "Cloud": <path d="M6 19.500c-7-.5-7-8.500-1-9C6 3 16 3 17.500 9c7 0 8 10 1 10.500z" fill="#4a72b0" />,
  "Cloud Transfer": <g><path d="M6 19.500c-7-.5-7-8.500-1-9C6 3 16 3 17.500 9c7 0 8 10 1 10.500z" fill="#c9c9cc" /><path d="M9 17v-6M6 13l3-3 3 3M15 10v6M12 14l3 3 3-3" stroke="#fff" strokeWidth="2" fill="none" /></g>,
  "Package In": <g><Box /><path d="M6 2l4 2 2-4 2 4 4-2-6 11z" fill="#6cc82a" stroke="#2a5a10" /></g>,
  "Package Out": <g><Box /><path d="M12 2l5 9-5-2-5 2z" fill="#6cc82a" stroke="#2a5a10" /></g>,
  "Tools": <g><path d="M12 2c4-2 9-1 12 7l-1 1-4-3-3 2-4-3 2-2z" fill="#333" /><path d="M16 8L4 21" stroke="#6cc82a" strokeWidth="3" strokeLinecap="round" /><path d="M1 3l3-2 4 5-2 3zM7 7l5 5" stroke="#888" strokeWidth="2" fill="#ddd" /><path d="M12 13l8 8" stroke="#6cc82a" strokeWidth="4" strokeLinecap="round" /></g>,
  "Green Search": <g><rect width="24" height="24" fill="#7cba55" /><circle cx="13.500" cy="10" r="6" fill="none" stroke="#fff" strokeWidth="2.200" /><path d="M9 14.500l-5 6" stroke="#fff" strokeWidth="3" /></g>,
  "Map Painter": <g><rect x="0" y="0" width="22" height="24" fill="#f2c94a" /><path d="M0 5l9-3 1 3-9 3z" fill="#4aa24a" /><path d="M0 9h4v7H0z" fill="#b0406a" /><path d="M7 10h3v6H7z" fill="#4a9aa0" /><path d="M11 0c2 6 3 9 5 13s4 5 3 11M3 24c3-5 8-4 11 0" stroke="#4a82d8" strokeWidth="3" fill="none" /><path d="M24 0L13 14" stroke="#8a4010" strokeWidth="4" /><path d="M0 20l14-6" stroke="#f8e8a0" strokeWidth="1.500" /></g>,

  "Add Layer": <g><rect x="1.500" y="1.500" width="18" height="18" fill="none" stroke="#888" strokeWidth="1.500" /><circle cx="19.500" cy="19.500" r="3.200" fill="#fff" stroke="#5a8c5a" strokeWidth="2.400" /></g>,
  "Filter": <g><path d="M1 3h21v3l-7.500 7.500V22h-5v-8.500L1 6z" fill="#5f8fc4" stroke="#3d6ea3" /><path d="M1 2h21v4H1z" fill="#e6d04a" /></g>,
  "Collapse All": <g><path d="M2 2h9M4 2v18h6M4 11h6" stroke="#888" fill="none" strokeWidth="1.300" /><rect x="7" y="9" width="4" height="4" fill="#f09a28" /><rect x="7" y="18" width="4" height="4" fill="#f09a28" /><path d="M16 1l7 8h-4v13h-6V9H9z" fill={B} stroke={D} /></g>,
  "Expand All": <g><path d="M2 2h9M4 2v18h6M4 11h6" stroke="#888" fill="none" strokeWidth="1.300" /><rect x="7" y="6" width="4" height="4" fill="#f09a28" /><rect x="7" y="15" width="4" height="4" fill="#f09a28" /><path d="M16 22l7-8h-4V2h-6v12H9z" fill={B} stroke={D} /></g>,
  "Properties": <g><circle cx="12" cy="12" r="10.500" fill="#5f8fc8" stroke="#3d6ea3" /><path d="M10.500 10h3v8h-3zM10.500 5.500h3v3h-3z" fill="#fff" /></g>,
  "Layer Styling": <g><path d="M1 9h10l6 4-7 9-5-3z" fill="#e88a3a" /><path d="M1 9l6 1 5 5-4 3z" fill="#e2574a" /><path d="M7 19l3-4 5 4-4 5z" fill="#5a8ccc" /><path d="M15 12L23 1" stroke="#d09a40" strokeWidth="3.500" /><path d="M10 9l8 6" stroke="#f0d060" strokeWidth="3.500" /></g>,
  "Add Group": <g fill="none" stroke="#888" strokeWidth="1.500"><path d="M2 8v13h10M6 5v13h11M10 2h11v13H10z" /><path d="M13 1h3v13h-3z" stroke={D} /><PlusB /></g>,
  "Visibility": <g><path d="M1 11q11-12 22 0-11 10-22 0z" fill="#e4e4e4" stroke="#999" strokeWidth="1.500" /><circle cx="12" cy="11" r="4.500" fill="#5f8fc4" /><circle cx="12" cy="11" r="2" fill="#234" /><Corner /></g>,
  "Filter Legend": <g><path d="M1 3h21v3l-7.500 7.500V22h-5v-8.500L1 6z" fill="#5f8fc4" stroke="#3d6ea3" /><path d="M1 2h21v4H1z" fill="#e6d04a" /><Corner /></g>,
  "Filter by Expression": <g fill="none" stroke="#777" strokeWidth="1.800"><path d="M12 3c-9-4-12 3-4 5-9 2-6 9 4 5M13 14h9l-3 3v6h-3v-6z" /></g>,
  "Remove Layer": <g><rect x="1.500" y="1.500" width="18" height="18" fill="#f2f2f2" stroke="#777" strokeWidth="1.500" /><rect x="14" y="16" width="9.500" height="7" rx="1" fill="#e23a3a" /><path d="M16 19.500h5.500" stroke="#fff" strokeWidth="1.800" /></g>,

  star: <Star />,
  folder: <Folder />,
  bookmarks: <g><path d="M5 2.500h17v19H3l-1-2V2h3zM5 2.500v18" fill="#ddd" stroke="#aaa" /><path d="M14 1.500h4v10l-2-2-2 2z" fill={B} stroke={D} /></g>,
  project: <g><path d="M2.500 3.500h8l2 3h9v15h-19z" fill="#a9dc5a" stroke="#888" strokeWidth="1.600" /><path d="M3 9l14 12M3 18l8-5" stroke="#e8f5c8" strokeWidth="1.500" /><circle cx="15.500" cy="10" r="4.500" fill="#1f8a1f" /></g>,
  home: <g><Folder /><path d="M7 14l5-5 5 5M8.500 13v6h7v-6" fill="none" stroke="#333" strokeWidth="1.800" /></g>,
  geopackage: <g><Box /><circle cx="12" cy="7.500" r="6.500" fill="#88add4" stroke={D} /><path d="M8 3l3 1-1 3-3 1zM14 2l3 3-3 2zM11 8h4l-2 3z" fill={D} /><path d="M1 9l11 5v9L1 18z" fill="#e0b800" stroke="#6a5200" /><path d="M23 9l-11 5v9l11-5z" fill="#fcf070" stroke="#6a5200" /></g>,
  feather: <g><path d="M23 1C12 2 6 9 4 17c5 1 11-2 14-8z" fill="#a9c4e4" stroke="#3d618a" /><path d="M1 23C5 15 12 7 21 3" fill="none" stroke="#3d618a" strokeWidth="1.800" /></g>,
  postgis: <path d="M3 2c3-2 6-1 8 0 4-2 8-1 11 1 2 4-1 9-3 13h3c-2 2-4 2-5 1 0 4 0 6-3 6s-3-4-3-8c-1 2-3 3-5 1C3 13 1 6 3 2zM11 2c-3 4-3 8-1 12M17 3c2 4 1 8 0 12" fill={B} stroke={D} strokeWidth="1.500" />,
  hana: <g><rect x="5" y="5" width="14" height="14" fill={B} stroke="#4a7ab0" /><rect x="1.500" y="1.500" width="21" height="21" fill="none" stroke={D} strokeWidth="2" strokeDasharray="2 2" /></g>,
  mssql: <path d="M1 1c8 0 18 2 22 11-8-1-15 4-22 9 4-7 4-14 0-20zM8 2c4 5 4 10 1 15M13 3c3 4 3 7 1 11M18 6c2 3 2 4 1 6" fill={B} stroke={D} strokeWidth="1.300" />,
  oracle: <rect x="1" y="4.500" width="22" height="15" rx="6" fill={B} stroke={D} strokeWidth="2.200" />,
  globe: <Globe cy={12} />,
};

const Icon = ({ name, size = 24 }: { name: string; size?: number }) => (
  <svg width={size} height={size} viewBox="0 0 24 24" aria-hidden="true" overflow="visible">{icons[name]}</svg>
);

/* ---------- window chrome ---------- */

const Window = styled.div`
  display: flex;
  flex-direction: column;
  height: 100vh;
  border-left: 1px solid #000;
  border-bottom: 1px solid #444;
  background: #efefef;
`;
const TitleBar = styled.header`
  display: flex;
  align-items: center;
  gap: 5px;
  height: 23px;
  flex: none;
  padding: 0 4px 0 2px;
  background: #f3f3f3;
  color: #7d7d7d;
`;
const Title = styled.h1`
  flex: 1;
  margin: 0;
  font-size: 11px;
  font-weight: 400;
  line-height: 20px;
`;
const WinButton = styled.button`
  display: grid;
  place-items: center;
  width: 41px;
  height: 20px;
`;
const MenuBar = styled.nav`
  display: flex;
  height: 20px;
  flex: none;
  padding: 0 3px;
  border-bottom: 1px solid #d4d4d4;
  background: #eeeeee;
`;
const MenuButton = styled.button`
  padding: 0 8px;
  font-size: 11px;
  line-height: 16px;
  color: #969696;
  u { text-underline-offset: 2px; }
`;
const Bar = styled.div<{ $last?: boolean }>`
  display: flex;
  align-items: center;
  height: ${(p) => (p.$last ? 38 : 39)}px;
  flex: none;
  border-bottom: 1px solid #b8b8b8;
  background: linear-gradient(#fafafa, #eeeeee);
`;
const Grip = styled.span<{ $first?: boolean }>`
  width: ${(p) => (p.$first ? 12 : 16)}px;
  height: 18px;
  flex: none;
  padding-left: ${(p) => (p.$first ? 5 : 8)}px;
  padding-right: ${(p) => (p.$first ? 2 : 3)}px;
  background: radial-gradient(circle at 1px 1px, #c2c2c2 1px, transparent 1px) 0 0 / 3px 3px content-box content-box;
`;
const Sep = styled.span`
  width: 7px;
  height: 28px;
  flex: none;
  display: flex;
  justify-content: center;
  &::before { content: ""; width: 1px; background: #c9c9c9; }
`;
const Tool = styled.button<{ $on?: boolean }>`
  display: grid;
  place-items: center;
  width: 33px;
  height: 31px;
  flex: none;
  border-radius: 3px;
  ${(p) => p.$on && css`background: #d9d9d9; box-shadow: inset 0 0 0 1px #a9a9a9;`}
  &:disabled svg { opacity: 0.32; filter: grayscale(0.5); }
`;
const Arrow = styled.button`
  display: grid;
  place-items: center;
  width: 12px;
  height: 31px;
  flex: none;
  color: #4a4a4a;
  &:disabled { color: #a8a8a8; }
`;
const Down = () => <svg width="7" height="4" viewBox="0 0 7 4"><path d="M0 0h7L3.500 4z" fill="currentColor" /></svg>;

type Item = { kind: "grip" | "sep" | "snap" } | { kind: "tool"; name: string; off?: boolean; on?: boolean; menu?: boolean };
const grip: Item = { kind: "grip" };
const sep: Item = { kind: "sep" };
const t = (...names: string[]): Item[] => names.map((name) => ({ kind: "tool", name }));
const off = (...names: string[]): Item[] => names.map((name) => ({ kind: "tool", name, off: true }));
const offMenu = (...names: string[]): Item[] => names.map((name) => ({ kind: "tool", name, off: true, menu: true }));
const menu = (name: string): Item => ({ kind: "tool", name, menu: true });

const rows: Item[][] = [
  [
    grip, ...t("New Project", "Open Project", "Save Project", "New Layout", "Layout Manager", "Style Manager"),
    grip, { kind: "tool", name: "Pan Map", on: true },
    ...t("Pan Map to Selection", "Zoom In", "Zoom Out", "Zoom Full", "Zoom to Selection", "Zoom to Layer", "Zoom to Native", "Zoom Last"),
    ...off("Zoom Next"),
    ...t("New Map View", "New 3D Map View", "New Spatial Bookmark", "Show Spatial Bookmarks", "Temporal Controller", "Refresh"),
    grip, ...t("Identify Features"), ...off("Field Calculator"), ...t("Toolbox", "Statistical Summary"),
    ...offMenu("Attribute Table"), menu("Measure Line"), ...t("Map Tips"), ...offMenu("Run Feature Action"),
  ],
  [
    grip, ...t("Data Source Manager", "New GeoPackage Layer", "New Shapefile Layer", "New SpatiaLite Layer", "New Scratch Layer", "New Mesh Layer"),
    sep, ...t("New Virtual Layer"), sep, grip,
    ...off("Current Edits", "Toggle Editing", "Save Layer Edits", "Add Feature"), ...offMenu("Vertex Tool"),
    ...off("Modify Attributes", "Delete Selected", "Cut Features", "Copy Features", "Paste Features", "Undo", "Redo"),
    grip, ...off("Layer Labeling", "Layer Diagrams"), sep, ...t("Pin Labels Tool", "Show Unplaced Labels"), sep,
    ...off("Pin Unpin Labels", "Show Hide Labels", "Move Label", "Rotate Label", "Change Label"),
    grip, ...t("GRASS Tools", "Add WMS", "Search WMS", "MetaSearch"),
    grip, ...t("Python Console", "Layer Stack", "Leaf Plugin", "Earth Engine"),
    grip, ...t("Help Contents"), grip, ...t("Geometry Checker"),
  ],
  [
    grip, ...off("Advanced Digitizing"), ...offMenu("Circular String", "Move Feature"),
    ...off("Rotate Feature", "Scale Feature", "Simplify Feature", "Add Ring", "Add Part", "Fill Ring", "Delete Ring", "Delete Part", "Reshape Features", "Offset Curve", "Reverse Line", "Trim Extend", "Split Features", "Split Parts", "Merge Features", "Merge Attributes"),
    ...offMenu("Rotate Symbols"), grip, ...t("Enable Snapping"), ...off("Snap Mode"),
    { kind: "tool", name: "Snap Type", off: true, on: true }, { kind: "snap" },
    ...t("Topological Editing", "Avoid Overlap"), ...off("Snap Intersection"), ...offMenu("Tracing"), ...off("Self Snapping"),
  ],
  [
    grip, ...offMenu("Add Circular String", "Add Circle", "Add Ellipse", "Add Rectangle", "Add Regular Polygon"),
    grip, ...offMenu("Select Features", "Select by Expression"), menu("Deselect Features"), ...t("Select by Location"),
    grip, ...off("Edit Mesh"), ...offMenu("Select Mesh"), ...off("Transform Mesh"), ...offMenu("Reindex Mesh"),
    grip, menu("New Annotation Layer"), ...t("Select Annotation", "Polygon Annotation", "Line Annotation", "Marker Annotation", "Text Annotation"),
    sep, menu("Text Balloon"), grip, ...t("Contrast", "Plugin Settings", "Add Item", "Reload"),
    grip, ...t("Cloud", "Cloud Transfer"), sep, ...t("Package In", "Package Out"), sep, ...t("Tools"),
    grip, ...t("Green Search", "Map Painter"), grip,
  ],
];

/* ---------- form controls ---------- */

const Field = styled.div<{ $w: number; $off?: boolean }>`
  display: flex;
  width: ${(p) => p.$w}px;
  height: 24px;
  flex: none;
  border: 1px solid #a6a6a6;
  border-radius: 3px;
  background: ${(p) => (p.$off ? "#efefef" : "#fff")};
  color: ${(p) => (p.$off ? "#777" : "#000")};
  font-family: ${dlg};
  font-size: 11px;
  overflow: hidden;
`;
const Text = styled.input`
  flex: 1;
  min-width: 0;
  border: 0;
  outline: 0;
  padding-left: 4px;
  background: transparent;
`;
const Steps = styled.div`
  display: flex;
  flex-direction: column;
  width: 14px;
  border-left: 1px solid #b5b5b5;
  background: #f6f6f6;
  color: #777;
`;
const Step = styled.button<{ $up?: boolean }>`
  flex: 1;
  display: grid;
  place-items: center;
  svg { transform: ${(p) => (p.$up ? "rotate(180deg)" : "none")}; }
`;
const SelectWrap = styled(Field)`
  align-items: center;
  background: ${(p) => (p.$off ? "linear-gradient(#fbfbfb, #efefef)" : "#fff")};
`;
const Select = styled.select`
  flex: 1;
  min-width: 0;
  border: 0;
  outline: 0;
  padding-left: 4px;
  appearance: none;
  background: transparent;
  &:disabled { opacity: 1; }
`;
const SelectArrow = styled.span<{ $line?: boolean }>`
  display: grid;
  place-items: center;
  width: 20px;
  height: 100%;
  border-left: ${(p) => (p.$line ? "1px solid #b5b5b5" : "0")};
  color: #777;
`;
const SnapGroup = styled.div`
  display: flex;
  gap: 1px;
`;

const Spin = ({ id, w, value, disabled, label }: { id?: string; w: number; value: string; disabled?: boolean; label?: string }) => (
  <Field $w={w} $off={disabled}>
    <Text id={id} aria-label={label} defaultValue={value} disabled={disabled} />
    <Steps>
      <Step $up aria-label="Increase" disabled={disabled}><Down /></Step>
      <Step aria-label="Decrease" disabled={disabled}><Down /></Step>
    </Steps>
  </Field>
);

const Toolbar = ({ items, last }: { items: Item[]; last: boolean }) => (
  <Bar role="toolbar" $last={last}>
    {items.map((it, i) => {
      if (it.kind === "grip") return <Grip key={i} $first={i === 0} />;
      if (it.kind === "sep") return <Sep key={i} />;
      if (it.kind === "snap")
        return (
          <SnapGroup key={i}>
            <Spin w={73} value="12" disabled label="Tolerance" />
            <SelectWrap $w={87} $off>
              <Select aria-label="Tolerance units" disabled><option>px</option></Select>
              <SelectArrow><Down /></SelectArrow>
            </SelectWrap>
          </SnapGroup>
        );
      return (
        <React.Fragment key={i}>
          <Tool $on={it.on} disabled={it.off} aria-label={it.name}><Icon name={it.name} /></Tool>
          {it.menu && <Arrow disabled={it.off} aria-label={`${it.name} options`}><Down /></Arrow>}
        </React.Fragment>
      );
    })}
  </Bar>
);

/* ---------- docks ---------- */

const Main = styled.main`
  display: flex;
  flex: 1;
  min-height: 0;
  padding-top: 1px;
`;
const Side = styled.aside`
  display: flex;
  flex-direction: column;
  width: 241px;
  flex: none;
`;
const DockHead = styled.div`
  display: flex;
  align-items: center;
  gap: 2px;
  height: 20px;
  flex: none;
  padding: 0 1px 0 4px;
`;
const DockTitle = styled.h2`
  flex: 1;
  margin: 0;
  font-size: 11px;
  font-weight: 400;
  line-height: 16px;
`;
const DockTools = styled.div`
  display: flex;
  align-items: center;
  height: 30px;
  flex: none;
  padding: 0 3px 3px;
`;
const MiniTool = styled.button`
  display: grid;
  place-items: center;
  width: 25px;
  height: 24px;
  &:disabled svg { opacity: 0.4; }
`;
const Frame = styled.div<{ $grow?: boolean }>`
  display: grid;
  grid-template: minmax(0, 1fr) auto / minmax(0, 1fr) auto;
  flex: ${(p) => (p.$grow ? "1" : "0 0 332px")};
  min-height: 0;
  border: 1px solid #b5b5b5;
  background: #fff;
`;
const Splitter = styled.div`
  display: flex;
  justify-content: center;
  align-items: center;
  height: 7px;
  flex: none;
  &::before { content: ""; width: 17px; height: 1px; background: repeating-linear-gradient(90deg, #aaa 0 1px, transparent 1px 3px); }
`;
const Tree = styled.ul`
  margin: 0;
  padding: 0;
  list-style: none;
  overflow: hidden;
`;
const Row = styled.li<{ $depth?: number; $selected?: boolean }>`
  display: flex;
  align-items: center;
  height: 22px;
  padding-left: ${(p) => 3 + (p.$depth || 0) * 17}px;
  white-space: nowrap;
  font-size: 11px;
  background: ${(p) => (p.$selected ? "#f0f0f0" : "none")};
`;
const Twisty = styled.span<{ $open?: boolean }>`
  display: grid;
  place-items: center;
  width: 11px;
  margin-right: 6px;
  color: #555;
  svg { transform: ${(p) => (p.$open ? "none" : "rotate(-90deg)")}; }
`;
const RowText = styled.span`
  margin-left: 6px;
`;
const LayerTwisty = styled(Twisty)`
  margin: 0 10px 0 4px;
`;
const LayerLabel = styled.label<{ $kind: string }>`
  margin-left: 7px;
  font-size: 12px;
  font-weight: 700;
  ${(p) => p.$kind === "active" && css`text-decoration: underline;`}
  ${(p) => p.$kind === "hidden" && css`font-style: italic; color: #808080;`}
`;
const Check = styled.input`
  appearance: none;
  width: 14px;
  height: 14px;
  flex: none;
  border: 1px solid #b0b0b0;
  background: #fff;
  &:checked {
    background: #fff url("data:image/svg+xml,%3Csvg xmlns='http://www.w3.org/2000/svg' viewBox='0 0 12 12'%3E%3Cpath d='M2.500 5.500l2.500 3.500 4-7' fill='none' stroke='%23000' stroke-width='2'/%3E%3C/svg%3E") center / 12px 12px no-repeat;
  }
`;
const LayerIcon = styled.svg`
  margin-left: 8px;
`;
const ScrollV = styled.div`
  display: flex;
  flex-direction: column;
  width: 14px;
  border-left: 1px solid #b5b5b5;
  background: #e4e4e4;
`;
const ScrollH = styled.div`
  display: flex;
  height: 14px;
  border-top: 1px solid #b5b5b5;
  background: #e4e4e4;
`;
const ScrollCorner = styled.div`
  border-top: 1px solid #b5b5b5;
  border-left: 1px solid #b5b5b5;
  background: #efefef;
`;
const ScrollButton = styled.button<{ $turn: number }>`
  display: grid;
  place-items: center;
  width: 13px;
  height: 13px;
  flex: none;
  background: #f8f8f8;
  color: #444;
  svg { transform: rotate(${(p) => p.$turn}deg); }
`;
const ThumbV = styled.div`
  flex: 0 0 56%;
  border: solid #b5b5b5;
  border-width: 1px 0;
  background: linear-gradient(90deg, #fff, #f4f4f4);
`;
const ThumbH = styled.div`
  flex: 1;
  margin-right: 9px;
  border: solid #b5b5b5;
  border-width: 0 1px;
  background: linear-gradient(#fff, #f4f4f4);
`;
const Fill = styled.div`
  flex: 1;
`;
const EndV = styled.div`
  border-top: 1px solid #b5b5b5;
`;
const EndH = styled.div`
  border-left: 1px solid #b5b5b5;
`;
const SplitV = styled.div`
  width: 7px;
  flex: none;
  display: flex;
  align-items: center;
  justify-content: center;
  &::before { content: ""; width: 1px; height: 17px; background: repeating-linear-gradient(#aaa 0 1px, transparent 1px 3px); }
`;

const browserItems: [string, string, number, string][] = [
  ["star", "Favorites", 0, "open"],
  ["folder", "C:\\Users\\Admin\\Desktop\\QGIS", 1, "closed"],
  ["bookmarks", "Spatial Bookmarks", 0, "closed"],
  ["project", "Project Home", 0, "closed"],
  ["home", "Home", 0, "closed"],
  ["folder", "C:\\ (Windows )", 0, "closed"],
  ["folder", "E:\\ (TOSHIBA EXT)", 0, "closed"],
  ["folder", "V:\\ (labmgf)", 0, "closed"],
  ["geopackage", "GeoPackage", 0, ""],
  ["feather", "SpatiaLite", 0, ""],
  ["postgis", "PostGIS", 0, "closed"],
  ["hana", "SAP HANA", 0, ""],
  ["mssql", "MSSQL", 0, ""],
  ["oracle", "Oracle", 0, ""],
  ["globe", "ArcGIS REST S", 0, ""],
];

const layers = [
  { name: "2022_dem_20cm", kind: "active", on: true, dark: "#1f4a73", mid: "#6fa8dc" },
  { name: "2021_dem_20cm", kind: "hidden", on: false, dark: "#2a3a52", mid: "#a9c4e8" },
  { name: "2022_ortofoto_20cm", kind: "shown", on: true, dark: "#2a3a52", mid: "#a9c4e8" },
];

const DockButtons = () => (
  <>
    {["M5.500 3h4v4M3 5.500h4.500V10H3z", "M3.500 3.500l5 5M8.500 3.500l-5 5"].map((d, i) => (
      <button key={d} aria-label={i ? "Close panel" : "Float panel"}>
        <svg width="12" height="12" viewBox="0 0 12 12" fill="none" stroke="#555">
          <rect x=".5" y=".5" width="11" height="11" rx="2" /><path d={d} strokeWidth={i ? 2 : 1} />
        </svg>
      </button>
    ))}
  </>
);

/* ---------- map ---------- */

const Canvas = styled.section`
  flex: 1;
  min-width: 0;
  border: 1px solid #b0b0b0;
  background: #fff;
  svg { width: 100%; height: 100%; }
`;

const outline: [number, number][] = [
  [578, 31], [600, 33], [700, 70], [944, 156], [965, 145], [998, 128], [1040, 105], [1065, 88], [1100, 80], [1140, 75], [1187, 77],
  [1196, 90], [1212, 108], [1210, 125], [1216, 145], [1210, 165], [1200, 195], [1182, 207], [1193, 234], [1170, 247], [1120, 256],
  [1118, 265], [1143, 282], [1130, 308], [1125, 352], [1155, 356], [1185, 361], [1241, 358], [1243, 400], [1254, 410], [1245, 440],
  [1232, 485], [1215, 493], [1180, 495], [1140, 513], [1090, 525], [1050, 536], [1043, 558], [1028, 564], [1010, 680], [990, 790],
  [975, 855], [989, 868], [970, 900], [968, 925], [957, 995], [936, 1050], [903, 1225], [923, 1228], [945, 1240], [915, 1300],
  [900, 1355], [880, 1397], [866, 1405], [860, 1560], [848, 1660], [830, 1760], [700, 1712], [500, 1645], [300, 1570], [55, 1481],
  [90, 1380], [160, 1190], [265, 900], [360, 640], [440, 410], [500, 250], [550, 110],
];

/* Walks the outline in raster cells, so that the border steps like a grid of pixels. */
const stepped = (() => {
  const cell = 3;
  const snap = (v: number) => Math.round(v / cell) * cell;
  let seed = 7;
  const noise = () => {
    seed = (seed * 16807) % 2147483647;
    return seed / 2147483647 - 0.5;
  };
  let d = `M${snap(outline[0][0])} ${snap(outline[0][1])}`;
  outline.forEach(([x, y], i) => {
    const [nx, ny] = outline[(i + 1) % outline.length];
    const n = Math.max(1, Math.round(Math.hypot(nx - x, ny - y) / 7));
    const rough = i > 2 && i < 37 ? 7 : 3;
    for (let k = 1; k <= n; k++) {
      d += `H${snap(x + ((nx - x) * k) / n + noise() * rough)}V${snap(y + ((ny - y) * k) / n + noise() * rough)}`;
    }
  });
  return d + "Z";
})();

const Dem = () => (
  <svg viewBox="0 0 1430 769" role="img" aria-label="Elevation raster">
    <defs>
      <clipPath id="edge"><path d={stepped} /></clipPath>
      {[4, 8, 14, 24, 40].map((b) => (
        <filter key={b} id={`b${b}`} filterUnits="userSpaceOnUse" x="-200" y="-200" width="1800" height="2300"><feGaussianBlur stdDeviation={b} /></filter>
      ))}
      <linearGradient id="flank" gradientUnits="userSpaceOnUse" x1="340" y1="380" x2="100" y2="1500">
        <stop offset="0" stopColor="#ffffbf" /><stop offset=".2" stopColor="#ecf7b8" /><stop offset=".42" stopColor="#cdebae" />
        <stop offset=".6" stopColor="#abdda4" /><stop offset=".78" stopColor="#78baa9" /><stop offset=".92" stopColor="#579fb2" /><stop offset="1" stopColor="#3f90b8" />
      </linearGradient>
      <linearGradient id="east" gradientUnits="userSpaceOnUse" x1="0" y1="600" x2="0" y2="1240">
        <stop offset="0" stopColor="#fdae61" /><stop offset=".3" stopColor="#fdc277" /><stop offset=".5" stopColor="#fdd38d" />
        <stop offset=".78" stopColor="#fed893" /><stop offset=".88" stopColor="#ffeea9" /><stop offset=".96" stopColor="#f8fcbe" /><stop offset="1" stopColor="#f1fabc" />
      </linearGradient>
      <linearGradient id="ice" gradientUnits="userSpaceOnUse" x1="0" y1="480" x2="0" y2="1340">
        <stop offset="0" stopColor="#fdb165" /><stop offset=".3" stopColor="#fdc57c" /><stop offset=".5" stopColor="#fdd38e" />
        <stop offset=".75" stopColor="#fedd98" /><stop offset="1" stopColor="#fee8a5" />
      </linearGradient>
      <linearGradient id="fan" gradientUnits="userSpaceOnUse" x1="560" y1="1620" x2="860" y2="1560">
        <stop offset="0" stopColor="#4f9bb3" /><stop offset=".35" stopColor="#83c1a9" /><stop offset=".62" stopColor="#abdda4" /><stop offset="1" stopColor="#d2edb0" />
      </linearGradient>
      <linearGradient id="west" gradientUnits="userSpaceOnUse" x1="500" y1="0" x2="730" y2="30">
        <stop offset="0" stopColor="#fff2b0" /><stop offset=".45" stopColor="#fee3a0" /><stop offset="1" stopColor="#fdbf75" />
      </linearGradient>
    </defs>
    <g transform="translate(390 80) scale(0.33333)">
      <g clipPath="url(#edge)">
        <rect width="1320" height="1800" fill="url(#west)" />
        <path d="M400 260H450L540 330 570 440 560 640 540 800 480 950 0 950z" fill="#fff3b1" filter="url(#b40)" />
        <path d="M400 330H450L500 430 525 560 520 720 500 830 480 950 0 950z" fill="#ffffbf" filter="url(#b24)" />
        <path d="M830 300Q760 430 640 500L600 640 570 800 640 860 820 600 900 450z" fill="#fdb76c" filter="url(#b40)" />
        <path d="M880 180L820 270 800 340 830 440 860 600 860 760 1060 700 1040 540 1300 500 1300 0 960 60z" fill="#fca95f" filter="url(#b24)" />
        <path d="M860 560H1060V1260H850z" fill="url(#east)" filter="url(#b14)" />
        {/* glacier tongue */}
        <path d="M840 470L700 560 630 660 600 830 500 830 450 980 470 1090 560 1200 560 1320 720 1370 760 1270 850 1130 870 900 840 700z" fill="url(#ice)" filter="url(#b24)" />
        <path d="M550 660L530 760 520 820 590 820 610 700 600 620z" fill="#fdc880" filter="url(#b14)" />
        {/* red accumulation basins */}
        <path d="M880 190L900 300 860 360 900 420 1000 400 1120 380 1290 380 1290 480 1180 490 1030 520 980 600 920 620 950 550 1010 480 940 430 860 390 890 280 960 150 1080 60 1240 60 1240 230 1100 260 1020 300 980 400 900 380z" fill="#f58a51" filter="url(#b24)" />
        <path d="M910 290Q960 210 1060 150L1230 60V230L1110 255Q1000 290 950 360L890 360z" fill="#ee6f45" filter="url(#b24)" />
        <path d="M1040 210Q1110 150 1230 110V190L1190 235 1060 235z" fill="#e0412d" filter="url(#b14)" />
        <path d="M1140 160L1240 100V180L1170 185z" fill="#d8201f" filter="url(#b24)" />
        <path d="M1040 400L1130 375 1270 350V480L1120 470 1010 450z" fill="#ee6f45" filter="url(#b24)" />
        <path d="M1160 395L1270 350V450L1150 440z" fill="#de382a" filter="url(#b24)" />
        <path d="M1225 370L1270 360V440L1215 430z" fill="#d7191c" filter="url(#b14)" />
        <path d="M1060 330L1120 270 1140 340 1030 350z" fill="#f2804d" filter="url(#b14)" />
        <path d="M830 360L905 330 920 380 850 385z" fill="#f27c4b" filter="url(#b14)" opacity=".7" />
        {/* moraine crests */}
        <g fill="none" strokeLinecap="round">
          <path d="M858 345Q880 260 960 200T1180 100" stroke="#fb9c59" strokeWidth="14" filter="url(#b4)" opacity=".85" />
          <path d="M980 400Q1010 330 1110 265" stroke="#fba25c" strokeWidth="24" filter="url(#b8)" />
          <path d="M980 403H1130Q1200 395 1240 370" stroke="#fa9656" strokeWidth="10" filter="url(#b4)" opacity=".5" />
          <path d="M990 490L1170 465 1230 430" stroke="#f89254" strokeWidth="12" filter="url(#b8)" />
          <path d="M990 490Q940 570 840 650L825 700" stroke="#fdbf75" strokeWidth="22" filter="url(#b8)" />
          <path d="M830 400V430Q800 490 730 530T640 650Q615 740 612 840T580 990" stroke="#fed997" strokeWidth="16" filter="url(#b8)" />
          <path d="M828 655Q820 740 835 800T850 960 840 1110" stroke="#fee5a1" strokeWidth="18" filter="url(#b8)" />
          <path d="M800 680Q790 740 810 800" stroke="#fedb98" strokeWidth="24" filter="url(#b14)" />
          <path d="M825 840Q835 1000 760 1160" stroke="#fdcd86" strokeWidth="18" filter="url(#b8)" />
          <path d="M640 800V880M750 840V930M690 990L710 1100" stroke="#fdc47c" strokeWidth="20" filter="url(#b14)" />
          <path d="M720 800Q700 900 740 1000T680 1200" stroke="#fee3a1" strokeWidth="16" filter="url(#b14)" />
          <path d="M555 838H600" stroke="#fff3b0" strokeWidth="20" filter="url(#b8)" />
        </g>
        {/* lower left slopes */}
        <path d="M440 860L560 860 612 880 606 980 500 1050 480 1090 500 1140 575 1200 560 1300 690 1370 740 1380 735 1270 800 1190 850 1130 1000 1120V1800H240L320 1000z" fill="#fbfdbf" filter="url(#b14)" />
        <path d="M480 870H600V930L480 960z" fill="#ffefac" filter="url(#b14)" />
        <path d="M420 930L450 1060 480 1110 550 1190 520 1290 580 1370 690 1400 690 1590H300L300 1100z" fill="#d6eeb2" filter="url(#b24)" />
        <path d="M760 1290L830 1180 880 1170 990 1200 900 1420 870 1450 700 1590 690 1480 780 1400z" fill="#f1fabc" filter="url(#b14)" />
        <path d="M760 1310L800 1240 850 1180" stroke="#e6f5b6" strokeWidth="24" fill="none" filter="url(#b14)" />
        <path d="M380 1140L430 1200 440 1300 500 1360 480 1430 380 1400 250 1330z" fill="#ace0a4" filter="url(#b40)" />
        <path d="M470 1420L650 1450 690 1620H430z" fill="#acdda4" filter="url(#b24)" />
        <path d="M410 1000L500 980" stroke="#e4f4b6" strokeWidth="14" filter="url(#b8)" />
        <path d="M480 1040Q590 1000 615 930" stroke="#ffffc4" strokeWidth="18" fill="none" filter="url(#b8)" />
        <path d="M440 350L462 460 492 600 502 720 470 840 430 920 365 1040 320 1180 245 1330 240 1440 200 1600H0V300z" fill="url(#flank)" filter="url(#b8)" />
        <path d="M365 1020L410 1020 425 1090 360 1080z" fill="#abdda4" filter="url(#b14)" />
        <path d="M350 1075L400 1080 385 1140 340 1230 290 1290 250 1450 140 1500 200 1380 290 1180z" fill="#5ba5b1" filter="url(#b14)" />
        <path d="M355 1090L375 1120 320 1210 260 1310 240 1450 150 1500 240 1310z" fill="#4797b6" filter="url(#b14)" />
        <path d="M270 1300L350 1270 400 1380 440 1500 450 1580 300 1480 240 1420z" fill="#8cc8a8" filter="url(#b24)" />
        <path d="M250 1380L350 1400 400 1440 460 1430 440 1500 250 1460z" fill="#66adad" filter="url(#b24)" />
        <path d="M690 1598L870 1430V1800H520L560 1640z" fill="url(#fan)" filter="url(#b4)" />
        <path d="M40 1500L230 1400 330 1450 425 1490 440 1570 520 1610 540 1680 500 1720 200 1640z" fill="#3b8db9" filter="url(#b24)" />
        <path d="M240 1430L330 1500 300 1560 220 1500z" fill="#2b83ba" filter="url(#b24)" />
        <path d="M430 1485L440 1570 530 1600 600 1560 640 1570 560 1520 480 1480z" fill="#86c3a8" filter="url(#b14)" />
        <path d="M590 1490L640 1450 650 1500 610 1560z" fill="#92caa6" filter="url(#b8)" />
        <path d="M520 1600Q600 1540 675 1610Q600 1600 530 1625z" fill="#3a8cb9" filter="url(#b4)" />
        <path d="M470 1620L560 1600 670 1610 640 1650 560 1690z" fill="#4896b6" filter="url(#b14)" />
      </g>
      <g fill="none" stroke="#222" strokeWidth="4">
        <path d="M1030 560H1044M1048 537H1058M1068 533H1080M1085 526L1110 521M1118 519H1128M1140 513H1150M1160 503L1180 494 1193 498M1204 495H1212M1222 488L1230 484M1244 438V426M1250 412V405M1131 306L1138 290M1118 263L1126 257M1145 251H1155M1190 234V228M1215 150V142M922 149L928 151M1125 352H1132M1170 359H1176M970 905V925M968 890V898M962 968V975M958 995V1000M951 1005V1012M945 1025V1032M937 1047V1053M922 1228V1233M933 1235H949L943 1250M925 1278V1288M917 1300V1308M895 1355V1360M865 1413V1436" />
      </g>
    </g>
  </svg>
);

/* ---------- status bar ---------- */

const Status = styled.footer`
  display: flex;
  align-items: center;
  height: 31px;
  flex: none;
  padding: 2px 7px 0 4px;
  font-family: ${dlg};
  font-size: 11px;
`;
const Locator = styled.label`
  display: flex;
  align-items: center;
  gap: 3px;
  width: 232px;
  height: 26px;
  padding-left: 10px;
  margin-right: auto;
  border: 1px solid #a6a6a6;
  border-radius: 3px;
  background: #fff;
  input::placeholder { color: #7a7a7a; opacity: 1; }
`;
const Group = styled.div<{ $lead?: number }>`
  display: flex;
  align-items: center;
  gap: 4px;
  margin-left: ${(p) => p.$lead ?? 8}px;
`;
const StatusButton = styled.button`
  display: flex;
  align-items: center;
`;

export default function App() {
  const menus: [string, string, string][] = [
    ["Pro", "j", "ect"], ["", "E", "dit"], ["", "V", "iew"], ["", "L", "ayer"], ["", "S", "ettings"], ["", "P", "lugins"], ["Vect", "o", "r"],
    ["", "R", "aster"], ["", "D", "atabase"], ["", "W", "eb"], ["", "M", "esh"], ["Pro", "c", "essing"], ["", "H", "elp"],
  ];
  return (
    <>
      <Global />
      <Window>
        <TitleBar>
          <svg width="17" height="17" viewBox="0 0 24 24">
            <circle cx="11" cy="11.500" r="7.500" fill="none" stroke="#5a9a2a" strokeWidth="6" />
            <path d="M12 12l11 11" stroke="#f0f0f0" strokeWidth="7" /><path d="M14 14l8 8.500" stroke="#5a9a2a" strokeWidth="5" />
            <path d="M11 11h5l-5 5z" fill="#f0a030" />
          </svg>
          <Title>*project-raster — QGIS [Federica (ENG)]</Title>
          {["M0 5.500h10", "M.5 3.500h7v6h-7zM3 1.500h6.500v6", "M0 0l10 10M10 0L0 10"].map((d, i) => (
            <WinButton key={d} aria-label={["Minimize", "Restore", "Close"][i]}>
              <svg width="10" height="10" viewBox="0 0 10 10" fill="none" stroke="#7a7a7a"><path d={d} /></svg>
            </WinButton>
          ))}
        </TitleBar>
        <MenuBar>
          {menus.map(([a, u, b]) => <MenuButton key={a + u + b}>{a}<u>{u}</u>{b}</MenuButton>)}
        </MenuBar>
        {rows.map((r, i) => <Toolbar key={i} items={r} last={i === rows.length - 1} />)}
        <Main>
          <Side>
            <DockHead><DockTitle>Browser</DockTitle><DockButtons /></DockHead>
            <DockTools>
              {["Add Layer", "Refresh", "Filter", "Collapse All", "Properties"].map((n) => (
                <MiniTool key={n} aria-label={n}><Icon name={n} size={15} /></MiniTool>
              ))}
            </DockTools>
            <Frame>
              <Tree>
                {browserItems.map(([icon, text, depth, state]) => (
                  <Row key={text} $depth={depth}>
                    <Twisty $open={state === "open"}>{state && <Down />}</Twisty>
                    <Icon name={icon} size={20} />
                    <RowText>{text}</RowText>
                  </Row>
                ))}
              </Tree>
              <ScrollV>
                <ScrollButton $turn={180} aria-label="Scroll up"><Down /></ScrollButton>
                <ThumbV /><Fill /><EndV />
                <ScrollButton $turn={0} aria-label="Scroll down"><Down /></ScrollButton>
              </ScrollV>
              <ScrollH>
                <ScrollButton $turn={90} aria-label="Scroll left"><Down /></ScrollButton>
                <ThumbH /><EndH />
                <ScrollButton $turn={-90} aria-label="Scroll right"><Down /></ScrollButton>
              </ScrollH>
              <ScrollCorner />
            </Frame>
            <Splitter />
            <DockHead><DockTitle>Layers</DockTitle><DockButtons /></DockHead>
            <DockTools>
              {["Layer Styling", "Add Group", "Visibility", "Filter Legend"].map((n) => (
                <MiniTool key={n} aria-label={n}><Icon name={n} size={15} /></MiniTool>
              ))}
              <MiniTool disabled aria-label="Filter by Expression"><Icon name="Filter by Expression" size={15} /></MiniTool>
              <Arrow disabled aria-label="Expression options"><Down /></Arrow>
              {["Expand All", "Collapse All", "Remove Layer"].map((n) => (
                <MiniTool key={n} aria-label={n}><Icon name={n} size={15} /></MiniTool>
              ))}
            </DockTools>
            <Frame $grow>
              <Tree>
                {layers.map((l) => (
                  <Row key={l.name} $selected={l.kind === "active"}>
                    <LayerTwisty><Down /></LayerTwisty>
                    <Check type="checkbox" id={l.name} defaultChecked={l.on} />
                    <LayerIcon width="17" height="17" viewBox="0 0 3 3" shapeRendering="crispEdges">
                      <rect width="3" height="3" fill={l.mid} />
                      <path d="M0 0h1v1H0zM2 0h1v1H2zM1 1h1v1H1zM0 2h1v1H0z" fill={l.dark} />
                      <path d="M2 2h1v1H2z" fill="#fff" />
                    </LayerIcon>
                    <LayerLabel htmlFor={l.name} $kind={l.kind}>{l.name}</LayerLabel>
                  </Row>
                ))}
              </Tree>
            </Frame>
          </Side>
          <SplitV />
          <Canvas><Dem /></Canvas>
        </Main>
        <Status>
          <Locator>
            <svg width="16" height="16" viewBox="0 0 16 16" fill="none" stroke="#777" strokeWidth="1.500"><circle cx="6.500" cy="6.500" r="5.500" /><path d="M10.500 10.500l5 4.500" strokeWidth="2" /></svg>
            <Text placeholder="Type to locate (Ctrl+K)" aria-label="Locator" />
          </Locator>
          <Group>
            <label htmlFor="coord">Coordinate</label>
            <Field $w={97}><Text id="coord" defaultValue="411452,5091155" /></Field>
            <StatusButton aria-label="Toggle extents">
              <svg width="19" height="19" viewBox="0 0 24 24" fill="#fff" stroke="#111" strokeWidth="2">
                <path d="M3 4l5-3 3 2 2-1 2 7-8 5-4-3z" /><path d="M6 3l2 7M10 2l2 7" /><ellipse cx="14" cy="17" rx="8" ry="6" transform="rotate(-20 14 17)" /><path d="M8 10l8 9M14 12l4 7" /><path d="M18 5l5-4M1 20l4-2" strokeDasharray="2 2" />
              </svg>
            </StatusButton>
          </Group>
          <Group $lead={12}>
            <label htmlFor="scale">Scale</label>
            <SelectWrap $w={94}>
              <Select id="scale"><option>1:28590</option></Select>
              <SelectArrow $line><Down /></SelectArrow>
            </SelectWrap>
          </Group>
          <Group>
            <StatusButton aria-label="Lock scale">
              <svg width="24" height="20" viewBox="0 0 24 20"><path d="M7 10V6.500a5 5 0 0 1 10 0V10" fill="none" stroke="#999" strokeWidth="2" /><rect x="4" y="9" width="16" height="10" rx="1" fill="#5f5f5f" /></svg>
            </StatusButton>
            <label htmlFor="mag">Magnifier</label>
            <Spin id="mag" w={93} value="100%" />
          </Group>
          <Group>
            <label htmlFor="rot">Rotation</label>
            <Spin id="rot" w={89} value="0.0 °" />
          </Group>
          <Group>
            <Check type="checkbox" id="render" defaultChecked />
            <label htmlFor="render">Render</label>
          </Group>
          <Group $lead={16}>
            <StatusButton>
              <svg width="20" height="18" viewBox="0 0 20 18" fill="none" stroke="#666"><ellipse cx="10" cy="8" rx="9" ry="7" fill="#ddd" /><ellipse cx="10" cy="8" rx="4" ry="7" /><path d="M1 8h18M3 4.500h14M3 11.500h14M10 1v16" /></svg>
              EPSG:32632
            </StatusButton>
          </Group>
          <Group $lead={22}>
            <StatusButton aria-label="Messages">
              <svg width="20" height="20" viewBox="0 0 20 20"><path d="M10 1c12 0 12 14 6 14l2 4-7-3.500C-3 15-3 1 10 1z" fill="#5a5a5a" /><path d="M5 8.500h2.500M9 8.500h2.500M13 8.500h2.500" stroke="#fff" strokeWidth="2" /></svg>
            </StatusButton>
          </Group>
        </Status>
      </Window>
    </>
  );
}
